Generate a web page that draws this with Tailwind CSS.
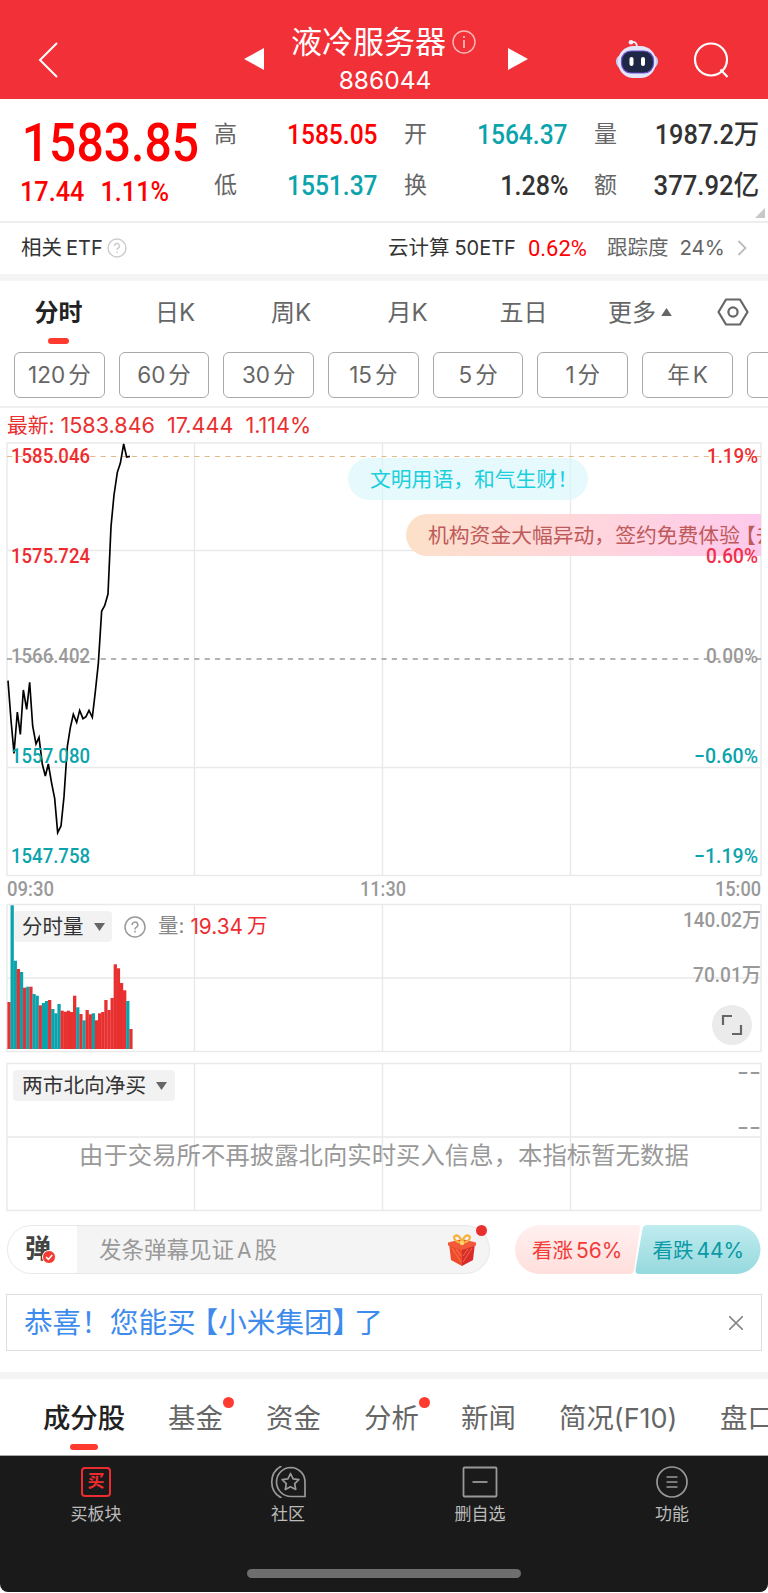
<!doctype html>
<html lang="zh-CN">
  <head>
    <meta charset="UTF-8" />
    <meta name="viewport" content="width=device-width, initial-scale=1.0" />
    <title>液冷服务器 886044</title>
    <script src="https://cdn.jsdelivr.net/npm/@tailwindcss/browser@4"></script>
  </head>
  <body class="bg-white">
    <div
      class="w-[768px] h-[1593px] overflow-hidden bg-white text-[#333] whitespace-nowrap font-[family-name:Inter,'Noto_Sans_CJK_SC',sans-serif]"
    >
      <!-- header -->
      <header class="h-[99px] bg-[#f23038] text-white flex pt-[26px]">
        <div class="w-[244px] pl-[38px] pt-[16px]">
          <svg class="w-5 h-9" viewBox="0 0 20 36" fill="none" stroke="#fff" stroke-width="2">
            <path d="M19 1L2 18l17 17" />
          </svg>
        </div>
        <svg class="w-5 h-[22px] mt-[22px]" viewBox="0 0 20 22" fill="#fff">
          <path d="M0 11L20 0v22z" />
        </svg>
        <div class="w-[244px] pr-[2px] flex flex-col items-center">
          <div class="flex items-center h-8 mr-[3px]">
            <h1 class="text-[31px] leading-8">液冷服务器</h1>
            <svg class="w-6 h-6 ml-[6px]" viewBox="0 0 24 24" fill="none" stroke="#fff" stroke-opacity=".65" stroke-width="1.4">
              <circle cx="12" cy="12" r="11" />
              <path d="M12 10v8M12 6v2" stroke-width="1.8" />
            </svg>
          </div>
          <div class="text-[24.5px] leading-6 mt-[10px]">886044</div>
        </div>
        <svg class="w-5 h-[22px] mt-[22px]" viewBox="0 0 20 22" fill="#fff">
          <path d="M20 11L0 0v22z" />
        </svg>
        <svg class="w-11 h-10 ml-[87px] mt-[13px]" viewBox="0 0 44 40">
          <path d="M16 3q6-1 6 5" fill="none" stroke="#e9ebfb" stroke-width="1.8" />
          <circle cx="16" cy="3.2" r="2.3" fill="#f4f5ff" />
          <rect x="1" y="16" width="42" height="13" rx="6" fill="#c9cef0" />
          <rect x="3" y="7" width="38" height="32" rx="15.5" fill="#e3e6fa" />
          <rect x="6.5" y="12" width="32" height="22" rx="9.5" fill="#1e2745" stroke="#6a4fd0" stroke-width="1.2" />
          <rect x="14.5" y="18" width="4" height="9" rx="2" fill="#fff" />
          <rect x="26" y="18" width="4" height="9" rx="2" fill="#fff" />
        </svg>
        <svg class="w-9 h-9 ml-[34px] mt-[16px]" viewBox="0 0 36 36" fill="none" stroke="#fff" stroke-width="2.2">
          <circle cx="18" cy="17.5" r="16" />
          <path d="M27.500 27.500l7 7.500" />
        </svg>
      </header>

      <!-- quote -->
      <section class="relative h-[122px] flex font-[family-name:Roboto,'Noto_Sans_CJK_SC',sans-serif]">
        <div class="w-[214px] pl-5 text-[#fe0000] font-medium">
          <div class="text-[54px] leading-[54px] pt-[17px] pl-[2px] origin-left scale-x-[.89]">1583.85</div>
          <div class="text-[28px] leading-8 mt-[6px] origin-left scale-x-[.9]">
            17.44<span class="pl-[18px]">1.11%</span>
          </div>
        </div>
        <div class="grid grid-cols-[164px_190px_191px] grid-rows-[50px_52px] pt-[11px] text-[27px] font-medium w-[545px]">
          <div class="flex justify-between items-center">
            <span class="text-[23px] font-normal text-[#666]">高</span>
            <span class="text-[#fe0000] origin-right scale-x-[.91]">1585.05</span>
          </div>
          <div class="flex justify-between items-center pl-[26px]">
            <span class="text-[23px] font-normal text-[#666]">开</span>
            <span class="text-[#0ba3ac] origin-right scale-x-[.91]">1564.37</span>
          </div>
          <div class="flex justify-between items-center pl-[26px]">
            <span class="text-[23px] font-normal text-[#666]">量</span>
            <span class="origin-right scale-x-[.94]">1987.2万</span>
          </div>
          <div class="flex justify-between items-center">
            <span class="text-[23px] font-normal text-[#666]">低</span>
            <span class="text-[#0ba3ac] origin-right scale-x-[.91]">1551.37</span>
          </div>
          <div class="flex justify-between items-center pl-[26px]">
            <span class="text-[23px] font-normal text-[#666]">换</span>
            <span class="origin-right scale-x-[.93]">1.28%</span>
          </div>
          <div class="flex justify-between items-center pl-[26px]">
            <span class="text-[23px] font-normal text-[#666]">额</span>
            <span class="origin-right scale-x-[.95]">377.92亿</span>
          </div>
        </div>
        <svg class="absolute right-[3px] bottom-[3px] w-[10px] h-[10px]" viewBox="0 0 10 10" fill="#c8c8c8">
          <path d="M10 0v10H0z" />
        </svg>
      </section>

      <!-- related etf -->
      <section class="h-[53px] border-t-2 border-[#eee] flex items-center pl-[21px] pr-[21px] text-[20.5px] pb-[1px]">
        <span>相关</span>
        <span class="text-[20px] ml-1">ETF</span>
        <svg class="w-5 h-5 ml-1" viewBox="0 0 20 20" fill="none" stroke="#ccc" stroke-width="1.4">
          <circle cx="10" cy="10" r="9" />
          <path d="M7.5 8a2.5 2.5 0 1 1 3.6 2.2q-1.1.6-1.1 1.8M10 13.5v1.5" />
        </svg>
        <span class="ml-auto">云计算</span>
        <span class="ml-[5px] text-[20px]">50ETF</span>
        <span class="ml-3 text-[22px] text-[#fe0000] font-[family-name:Roboto]">0.62%</span>
        <span class="ml-5 text-[#666]">跟踪度</span>
        <span class="ml-[11px] text-[20.5px] text-[#666]">24%</span>
        <svg class="w-[10px] h-4 ml-[12px]" viewBox="0 0 10 16" fill="none" stroke="#bbb" stroke-width="1.8">
          <path d="M1.5 1l7 7-7 7" />
        </svg>
      </section>
      <div class="h-[7px] bg-[#f4f4f4]"></div>

      <!-- period tabs -->
      <nav class="h-[71px] pt-[12px] flex text-[24px] leading-10 text-[#666]">
        <div class="w-[117px] flex flex-col items-center text-[#222] font-bold">
          分时
          <div class="w-[21px] h-[6px] rounded-full bg-[#ff3b30] mt-[5px]"></div>
        </div>
        <div class="w-[116px] text-center">日K</div>
        <div class="w-[116px] text-center">周K</div>
        <div class="w-[117px] text-center">月K</div>
        <div class="w-[115px] text-center">五日</div>
        <div class="w-[117px] pl-[27px] flex">
          更多
          <svg class="w-[11px] h-2 mt-[15px] ml-[5px]" viewBox="0 0 12 9" fill="#666"><path d="M6 0l6 9H0z" /></svg>
        </div>
        <svg class="w-8 h-7 ml-[19px] mt-[5px]" viewBox="0 0 32 28" fill="none" stroke="#666" stroke-width="2.2">
          <path d="M9 1.5h14L30.500 14 23 26.500H9L1.500 14z" stroke-linejoin="round" />
          <circle cx="16" cy="14" r="4.600" />
        </svg>
      </nav>
      <div class="flex gap-[14px] pl-[14px] text-[22.5px] text-[#666] h-[54px] *:shrink-0 *:w-[90.7px] *:h-[46px] *:border *:border-[#aaa] *:rounded-md *:flex *:items-center *:justify-center *:gap-[3px]">
        <div><span>120</span>分</div>
        <div><span>60</span>分</div>
        <div><span>30</span>分</div>
        <div><span>15</span>分</div>
        <div><span>5</span>分</div>
        <div><span>1</span>分</div>
        <div>年<span>K</span></div>
        <div></div>
      </div>

      <div class="h-[35px] border-t-2 border-[#f0f0f0] pl-[7px] leading-[35px] text-[21.6px] text-[#e93030]">
        <span class="text-[20.800px]">最新: </span>1583.846<span class="pl-3">17.444</span><span class="pl-3">1.114%</span>
      </div>

      <!-- price chart -->
      <section class="relative h-[462px]">
        <svg class="w-[768px] h-[462px] font-[family-name:Roboto]" viewBox="0 441 768 462">
          <g fill="none" stroke="#e9e9e9" stroke-width="1.4">
            <path d="M7 443H761V875.500H7zM194.500 443V875M382.500 443V875M570.500 443V875M7 550.500H761M7 767.500H761" />
          </g>
          <path d="M7 456.500H762" stroke="#e3b98a" stroke-width="1.200" stroke-dasharray="5.200 5.200" />
          <path d="M7 659H762" stroke="#999" stroke-width="1.400" stroke-dasharray="5.200 5.200" />
          <polyline
            transform="translate(0 430) scale(.33333)"
            fill="none"
            stroke="#000"
            stroke-width="5"
            points="24,752 33,870 42,970 52,846 61,913 70,780 80,838 89,757 98,888 108,942 117,922 127,1003 136,1038 145,1002 155,1060 164,1105 173,1208 183,1188 192,1100 202,950 211,893 220,853 230,877 239,841 249,866 258,860 267,841 277,862 286,785 295,700 305,543 314,527 324,492 333,290 342,195 352,127 361,100 371,42 380,81 390,79"
          />
          <g font-size="20.5" font-weight="500">
            <g fill="#ee2c30">
              <text x="11" y="462.500" textLength="79" lengthAdjust="spacingAndGlyphs">1585.046</text>
              <text x="11" y="562.500" textLength="79" lengthAdjust="spacingAndGlyphs">1575.724</text>
            </g>
            <text x="11" y="662.500" fill="#999" textLength="79" lengthAdjust="spacingAndGlyphs">1566.402</text>
            <g fill="#0ba3ac">
              <text x="11" y="762.500" textLength="79" lengthAdjust="spacingAndGlyphs">1557.080</text>
              <text x="11" y="862.500" textLength="79" lengthAdjust="spacingAndGlyphs">1547.758</text>
            </g>
          </g>
          <g font-size="19.5" font-weight="500" fill="#999">
            <text x="7" y="896" textLength="47" lengthAdjust="spacingAndGlyphs">09:30</text>
            <text x="360" y="896" textLength="46" lengthAdjust="spacingAndGlyphs">11:30</text>
            <text x="715" y="896" textLength="46" lengthAdjust="spacingAndGlyphs">15:00</text>
          </g>
        </svg>
        <!-- scrolling comments -->
        <div class="absolute left-[348px] top-[17px] w-[240px] h-[42px] rounded-full bg-[#d9f6fb]/65 text-[#1bcfdc] text-[20.8px] leading-[43px] pl-[22px]">
          文明用语，和气生财！
        </div>
        <div class="absolute left-[406px] top-[73px] w-[355px] h-[42px] overflow-hidden rounded-l-full bg-linear-to-r from-[#fcdfc6]/95 via-[#ffd2d8]/90 to-[#fec3ea]/90 text-[#bf5a5a] text-[20.8px] leading-[43px] pl-[22px]">
          机构资金大幅异动，签约免费体验<span class="ml-[-5px]">【去</span>
        </div>
        <svg class="absolute left-0 top-0 w-[768px] h-[462px] font-[family-name:Roboto]" viewBox="0 441 768 462">
          <g font-size="20.5" font-weight="500" text-anchor="end">
            <text x="758" y="462.500" fill="#ee2c30" textLength="51" lengthAdjust="spacingAndGlyphs">1.19%</text>
            <text x="758" y="562.500" fill="#f0304a" textLength="52" lengthAdjust="spacingAndGlyphs">0.60%</text>
            <text x="758" y="662.500" fill="#999" textLength="52" lengthAdjust="spacingAndGlyphs">0.00%</text>
            <text x="758" y="762.500" fill="#0ba3ac" textLength="64" lengthAdjust="spacingAndGlyphs">−0.60%</text>
            <text x="758" y="862.500" fill="#0ba3ac" textLength="64" lengthAdjust="spacingAndGlyphs">−1.19%</text>
          </g>
        </svg>
      </section>

      <!-- volume -->
      <section class="relative h-[150px]">
        <svg class="w-[768px] h-[150px] font-[family-name:Roboto,'Noto_Sans_CJK_SC',sans-serif]" viewBox="0 903 768 150">
          <path
            fill="none"
            stroke="#e9e9e9"
            stroke-width="1.4"
            d="M7 904.500H761V1051.500H7zM194.500 904V1051M382.500 904V1051M570.500 904V1051M7 978H761"
          />
          <g id="volume"></g>
          <g font-size="20.500" font-weight="500" fill="#999" text-anchor="end">
            <text x="761" y="927" textLength="78" lengthAdjust="spacingAndGlyphs">140.02万</text>
            <text x="761" y="982" textLength="68" lengthAdjust="spacingAndGlyphs">70.01万</text>
          </g>
        </svg>
        <div class="absolute left-[14px] top-[8px] flex items-center text-[20.500px]">
          <div class="w-[98px] h-[31px] rounded-sm bg-[#f2f2f2] flex items-center pl-2 pt-[1px]">
            分时量
            <svg class="w-[11px] h-2 ml-[10px]" viewBox="0 0 11 8" fill="#666"><path d="M0 0h11L5.500 8z" /></svg>
          </div>
          <svg class="w-[22px] h-[22px] ml-3" viewBox="0 0 22 22" fill="none" stroke="#999" stroke-width="1.500">
            <circle cx="11" cy="11" r="10" />
            <path d="M8.200 9a2.800 2.800 0 1 1 4 2.400q-1.200.6-1.200 2M11 14.800v1.700" />
          </svg>
          <span class="ml-3 text-[#888]">量:</span>
          <span class="ml-[6px] text-[20.800px] text-[#ee2c30]">19.34</span>
          <span class="ml-1 text-[#ee2c30]">万</span>
        </div>
        <div class="absolute left-[712px] top-[102px] w-10 h-10 rounded-full bg-[#ebebeb] flex items-center justify-center">
          <svg class="w-[22px] h-[22px]" viewBox="0 0 22 22" fill="none" stroke="#666" stroke-width="2.200">
            <path d="M2 11V2h9M20 11v9h-9" />
          </svg>
        </div>
      </section>

      <!-- northbound -->
      <section class="relative h-[150px] mt-[9px]">
        <svg class="w-[768px] h-[150px]" viewBox="0 1062 768 150">
          <path
            fill="none"
            stroke="#e9e9e9"
            stroke-width="1.4"
            d="M7 1063.500H761V1210.500H7zM194.500 1063V1210M382.500 1063V1210M570.500 1063V1210M7 1137H761"
          />
          <g fill="#999" font-size="24">
            <text x="737" y="1080" textLength="24" lengthAdjust="spacingAndGlyphs">--</text>
            <text x="737" y="1135" textLength="24" lengthAdjust="spacingAndGlyphs">--</text>
          </g>
        </svg>
        <div class="absolute left-[13px] top-[8px] w-[162px] h-[31px] rounded-sm bg-[#f2f2f2] flex items-center pl-[9px] text-[20.700px] pt-[1px]">
          两市北向净买
          <svg class="w-[11px] h-2 ml-[10px]" viewBox="0 0 11 8" fill="#666"><path d="M0 0h11L5.500 8z" /></svg>
        </div>
        <p class="absolute left-[79px] top-[77px] text-[24.400px] leading-8 text-[#999]">
          由于交易所不再披露北向实时买入信息，本指标暂无数据
        </p>
      </section>

      <!-- comment bar -->
      <section class="flex mt-[13px] pl-[7px] h-[50px]">
        <div class="relative w-[483px] h-[49px] border-[1.500px] border-[#e8e8e8] rounded-full bg-[#f4f4f4] flex items-center">
          <div class="relative w-[69px] h-full bg-white rounded-l-full flex items-center pl-[17px] pb-[2px] text-[26px] font-bold text-[#444]">
            弹
            <svg class="absolute left-[34px] top-[24px] w-[14px] h-[14px]" viewBox="0 0 14 14">
              <circle cx="7" cy="7" r="6.500" fill="#f33b30" stroke="#fff" />
              <path d="M4 7l2.400 2.400L10.200 5" fill="none" stroke="#fff" stroke-width="1.600" />
            </svg>
          </div>
          <span class="ml-[22px] text-[22.500px] text-[#999]">发条弹幕见证<span class="mx-[3px] text-[21px]">A</span>股</span>
          <svg class="absolute left-[438px] top-[8px] w-[32px] h-[32px]" viewBox="0 0 32 32">
            <path d="M3 9l13 6v17L5 26z" fill="#ee4a2c" />
            <path d="M29 9l-13 6v17l11-6z" fill="#d92c2a" />
            <path d="M2 8.500L16 5l14 3.500v3L16 16 2 11.500z" fill="#f2593a" />
            <path d="M6 14l9 14M10 15l5 7M26 14l-9 14M22 15l-5 7" stroke="#f98a5c" stroke-width=".7" />
            <path d="M16 9C11 9 6 4 9 2s7 3 7 7c0-4 4-9 7-7s-2 7-7 7" fill="none" stroke="#f7b23c" stroke-width="2.200" />
            <circle cx="16" cy="9" r="2.200" fill="#ffd469" />
          </svg>
          <div class="absolute left-[468px] top-[-1px] w-[11px] h-[11px] rounded-full bg-[#e93030]"></div>
        </div>
        <div class="relative w-[246px] ml-[25px]">
          <svg class="w-[246px] h-[49px]" viewBox="0 0 247 49">
            <defs>
              <linearGradient id="up" x2="0" y2="1"><stop stop-color="#fff0ef" /><stop offset="1" stop-color="#ffdfdc" /></linearGradient>
              <linearGradient id="down" x2="0" y2="1"><stop stop-color="#c0ecef" /><stop offset="1" stop-color="#96d9de" /></linearGradient>
            </defs>
            <path d="M24.500 0H122q4 0 3.500 4l-6 41q-.5 4-4.500 4H24.500a24.500 24.500 0 0 1 0-49z" fill="url(#up)" />
            <path d="M133 0H222a24.500 24.500 0 0 1 0 49H124q-3.500 0-3-4l7-41q.7-4 5-4z" fill="url(#down)" />
          </svg>
          <div class="absolute inset-0 flex items-center text-[20.500px] pt-[1px]">
            <span class="ml-[17px] text-[#f33b38]">看涨<span class="ml-[3px] text-[21px]">56%</span></span>
            <span class="ml-[30px] text-[#0a9aa6]">看跌<span class="ml-[3px] text-[21px]">44%</span></span>
          </div>
        </div>
      </section>

      <!-- banner -->
      <div class="mt-[19px] mx-[6px] h-[57px] border-[1.500px] border-[#ddd] flex items-center justify-between pl-[17px] pr-[18px] pt-[1px]">
        <span class="text-[28.600px] text-[#3d8bec]">恭喜！您能<span class="tracking-[-6px]">买</span>【小米集团<span class="tracking-[-7px]">】</span>了</span>
        <svg class="w-[14px] h-[14px]" viewBox="0 0 14 14" stroke="#888" stroke-width="1.600"><path d="M0 0l14 14M14 0L0 14" /></svg>
      </div>
      <div class="mt-[21px] h-[7px] bg-[#f4f4f4]"></div>

      <!-- detail tabs -->
      <nav class="h-[76px] flex pl-[42px] pt-[19px] text-[27.400px] leading-[40px] text-[#666] *:shrink-0">
        <div class="w-[84px] mr-[42px] flex flex-col items-center text-[#222] font-medium">
          成分股
          <div class="w-[28px] h-[6px] rounded-full bg-[#ff3b30] mt-[6px]"></div>
        </div>
        <div class="relative w-[98px]">
          基金
          <i class="absolute left-[55px] top-[-1px] w-[11px] h-[11px] rounded-full bg-[#ff3b30]"></i>
        </div>
        <div class="w-[98px]">资金</div>
        <div class="relative w-[97px]">
          分析
          <i class="absolute left-[55px] top-[-1px] w-[11px] h-[11px] rounded-full bg-[#ff3b30]"></i>
        </div>
        <div class="w-[98px]">新闻</div>
        <div class="w-[161px]">简况<span class="text-[27px]">(F10)</span></div>
        <div>盘口</div>
      </nav>

      <!-- bottom bar -->
      <footer class="h-[137px] bg-[#1a1a1a] border-t border-[#aaa] rounded-b-[8px] text-[17px] text-[#bbb]">
        <div class="grid grid-cols-4 pt-[10px] leading-6">
          <div class="flex flex-col items-center gap-[4px]">
            <div class="h-8 flex items-center">
              <div class="w-[30px] h-[30px] border-2 border-[#ee2c30] rounded-[4px] text-[#ee2c30] text-[17px] font-bold leading-[25px] text-center">买</div>
            </div>
            买板块
          </div>
          <div class="flex flex-col items-center gap-[4px]">
            <svg class="w-9 h-8" viewBox="0 0 36 32" fill="none" stroke="#999" stroke-width="1.700">
              <path d="M21 1.500a14.500 14.500 0 1 0 0 29H35V16A14.500 14.500 0 0 0 21 1.500z" />
              <path d="M11.500 0a18 18 0 0 0 0 32" />
              <path d="M20.500 7.500l2.600 5.300 5.800.8-4.200 4 1 5.900-5.200-2.800-5.200 2.800 1-5.900-4.200-4 5.800-.8z" stroke-linejoin="round" />
            </svg>
            社区
          </div>
          <div class="flex flex-col items-center gap-[4px]">
            <svg class="w-9 h-8" viewBox="0 0 36 32" fill="none" stroke="#999" stroke-width="1.800">
              <rect x="1.500" y="1.500" width="33" height="29" rx="1" />
              <path d="M10.500 16h15" />
            </svg>
            删自选
          </div>
          <div class="flex flex-col items-center gap-[4px]">
            <svg class="w-8 h-8" viewBox="0 0 32 32" fill="none" stroke="#999" stroke-width="1.700">
              <circle cx="16" cy="16" r="15" />
              <path d="M10.500 11h11M10.500 16h11M10.500 21h11" />
            </svg>
            功能
          </div>
        </div>
        <div class="w-[274px] h-[9px] mx-auto mt-[43px] rounded-full bg-[#6e6e6e]"></div>
      </footer>
    </div>
    <script>
      // [height, rising] for every minute
      const volumes = [
        [47, 1], [143.7, 0], [88.3, 0], [80, 1], [77, 0], [61.3, 1], [62.3, 0], [62.3, 1],
        [55, 0], [53.3, 0], [43.7, 1], [46, 0], [48, 0], [49, 1], [40, 0], [35.7, 0],
        [45, 0], [38.3, 1], [37.3, 1], [38.3, 1], [37, 1], [53.3, 1], [41.7, 0], [35, 1],
        [28.7, 0], [39, 1], [34.7, 1], [35.7, 0], [28.7, 1], [35.7, 1], [37, 1], [49, 1],
        [39, 1], [51, 1], [84.7, 1], [80.7, 1], [66, 1], [58.7, 1], [48, 0], [20, 1],
      ];
      const group = document.getElementById('volume');

      volumes.forEach(([height, rising], i) => {
        const bar = document.createElementNS('http://www.w3.org/2000/svg', 'rect');
        bar.setAttribute('x', 7.4 + i * 3.125);
        bar.setAttribute('y', 1049 - height);
        bar.setAttribute('width', 3.3);
        bar.setAttribute('height', height);
        bar.setAttribute('fill', rising ? '#e93030' : '#0ba3ac');
        group.appendChild(bar);
      });
    </script>
  </body>
</html>
